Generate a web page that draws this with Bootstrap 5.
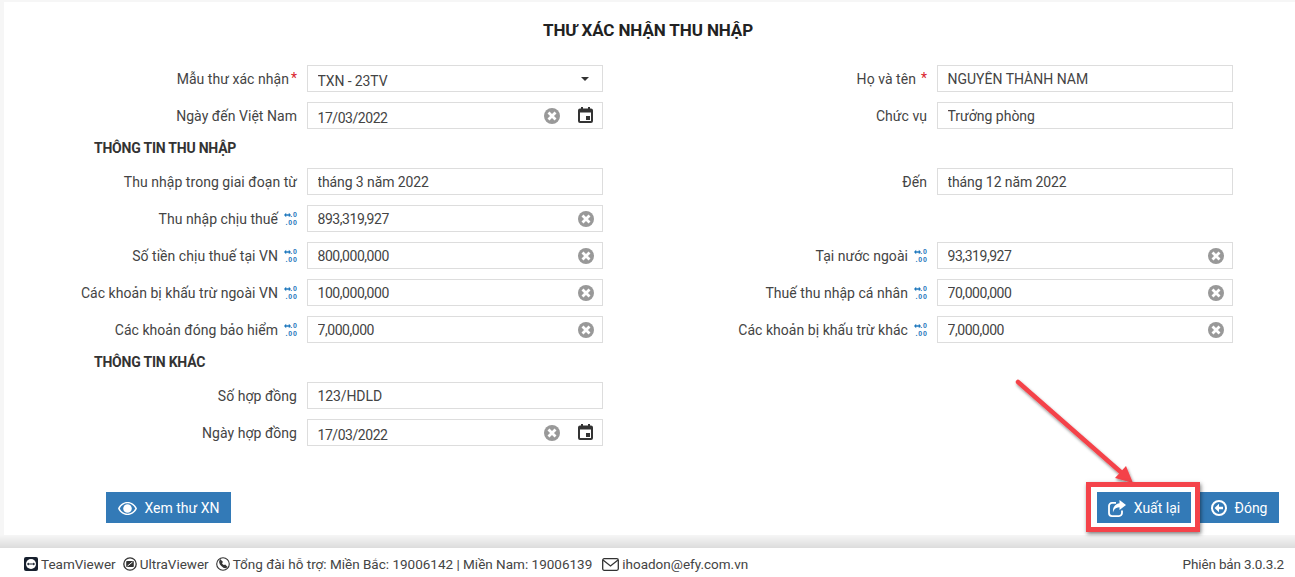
<!DOCTYPE html>
<html lang="vi">
<head>
<meta charset="utf-8">
<title>Thư xác nhận thu nhập</title>
<link rel="stylesheet" href="https://cdn.jsdelivr.net/npm/bootstrap@5.3.0/dist/css/bootstrap.min.css">
<style>
html,body{height:577px;overflow:hidden}
body{font-family:Roboto,"Liberation Sans",sans-serif;font-size:14px;color:#333;background:#fff;position:relative}
.shell{height:548px;padding:2px 0 13px 4px;background:linear-gradient(#f6f6f6 0,#f6f6f6 535px,#dcdcdc 548px)}
.sheet{height:533px;background:#fff;position:relative}
.page-title{font-size:17px;font-weight:700;color:#222;text-align:center;line-height:20px;margin:0;padding:18px 0 25px 0;width:1288px;letter-spacing:-.1px;font-family:Roboto,sans-serif}
.frow{height:27px;margin-bottom:10px}
.lbl{text-align:right;line-height:26px;color:#444;padding-right:10px;white-space:nowrap;display:flex;justify-content:flex-end;align-items:center;gap:5px;letter-spacing:.04px}
.lbl-a{width:303px}
.lbl-b{width:334px}
.req{color:#d9232d;margin-left:-3px;align-self:flex-start;line-height:26px}
.fbox{width:296px;height:27px;position:relative}
.fld.form-control{height:27px;min-height:27px;border:1px solid #ddd;border-radius:0;padding:0 9.5px;font-size:14px;line-height:23px;color:#444;font-family:Roboto,sans-serif;background:#fff;box-shadow:none}
.fld.low{padding-top:5px}
.fld.tn{letter-spacing:-.45px}
.fld.ts{letter-spacing:-.1px}
.sect{font-weight:700;font-size:14px;color:#333;line-height:20px;padding-left:90px;height:39px;padding-top:9px;margin-top:-10px;letter-spacing:-.22px}
.ico-x{position:absolute;right:9px;top:6px;width:16px;height:16px}
.ico-x2{right:43px}
.ico-cal{position:absolute;right:10px;top:5px;width:15px;height:16px}
.caret-dn{position:absolute;right:14px;top:12px;width:0;height:0;border-left:4px solid transparent;border-right:4px solid transparent;border-top:4.5px solid #333}
.numf{display:inline-flex;flex-direction:column;align-items:flex-end;width:14px;height:17px;flex:none;margin-top:2px;color:#1f78bd;font-size:7px;font-weight:700;line-height:8.2px;font-family:"Liberation Sans",sans-serif;letter-spacing:.9px}
.numl{display:flex;align-items:center;margin-right:-.9px}
.numl svg{margin-right:-.5px}
.actions{position:absolute;left:102px;top:490px;width:1173px;display:flex;justify-content:space-between}
.btn.act{background:#337ab7;border:0;border-radius:0;color:#fff;height:31px;font-size:14px;font-family:Roboto,sans-serif;padding:1px 0 0;display:inline-flex;align-items:center;font-weight:400;white-space:nowrap}
.act-a{width:125px;justify-content:center;gap:8px}
.act-b{width:94px;justify-content:center;gap:8px;margin-right:8px}
.act-c{width:80px;justify-content:center;gap:8px}
.redbox{position:absolute;left:1086px;top:482px;width:114px;height:50px;border:5px solid #f4434a;box-shadow:1px 2px 4px rgba(0,0,0,.5);pointer-events:none}
.arrow{position:absolute;left:1005px;top:370px;width:140px;height:125px;overflow:visible;pointer-events:none}
.foot{height:29px;background:#fff;padding:3px 11px 0 24px;font-size:13.5px;color:#444;line-height:26px;display:flex;justify-content:space-between;align-items:center}
.foot svg{flex:none}
.fitem{display:inline-flex;align-items:center;gap:3px;margin-right:7px}
.fitem-mail{margin-left:3px}
.ver{letter-spacing:-.15px}
</style>
</head>
<body>
<svg width="0" height="0" class="position-absolute" aria-hidden="true">
  <symbol id="i-x" viewBox="0 0 16 16"><circle cx="8" cy="8" r="8" fill="#999"/><path d="M4.500 4.500l7 7M11.500 4.500l-7 7" stroke="#fff" stroke-width="2.800"/></symbol>
  <symbol id="i-cal" viewBox="0 0 15 16"><path fill="#333" fill-rule="evenodd" d="M3 0h2v1.500h5V0h2v1.500h1a2 2 0 0 1 2 2V14a2 2 0 0 1-2 2H2a2 2 0 0 1-2-2V3.500a2 2 0 0 1 2-2h1zM2 5.500V14h11V5.500zM8 9h4v4H8z"/></symbol>
  <symbol id="i-ar" viewBox="0 0 7 6"><path d="M0 3l2.200-2.300v1.600h2.600V.7L7 3 4.800 5.300V3.700H2.200v1.600z" fill="#1f78bd"/></symbol>
</svg>
<div class="shell">
<div class="sheet">
<h1 class="page-title">THƯ XÁC NHẬN THU NHẬP</h1>

<div class="d-flex frow">
  <div class="lbl lbl-a">Mẫu thư xác nhận<span class="req">*</span></div>
  <div class="fbox"><input class="form-control fld low ts" value="TXN - 23TV" readonly><span class="caret-dn"></span></div>
  <div class="lbl lbl-b">Họ và tên <span class="req ms-0">*</span></div>
  <div class="fbox"><input class="form-control fld" value="NGUYỄN THÀNH NAM" readonly></div>
</div>
<div class="d-flex frow">
  <div class="lbl lbl-a">Ngày đến Việt Nam</div>
  <div class="fbox"><input class="form-control fld low tn" value="17/03/2022" readonly>
    <svg class="ico-x ico-x2"><use href="#i-x"/></svg>
    <svg class="ico-cal"><use href="#i-cal"/></svg>
  </div>
  <div class="lbl lbl-b">Chức vụ</div>
  <div class="fbox"><input class="form-control fld" value="Trưởng phòng" readonly></div>
</div>

<div class="sect">THÔNG TIN THU NHẬP</div>

<div class="d-flex frow">
  <div class="lbl lbl-a">Thu nhập trong giai đoạn từ</div>
  <div class="fbox"><input class="form-control fld ts" value="tháng 3 năm 2022" readonly></div>
  <div class="lbl lbl-b">Đến</div>
  <div class="fbox"><input class="form-control fld ts" value="tháng 12 năm 2022" readonly></div>
</div>
<div class="d-flex frow">
  <div class="lbl lbl-a">Thu nhập chịu thuế <span class="numf"><span class="numl"><svg width="7" height="6"><use href="#i-ar"/></svg>.0</span><span class="numl">.00</span></span></div>
  <div class="fbox"><input class="form-control fld tn" value="893,319,927" readonly>
    <svg class="ico-x"><use href="#i-x"/></svg></div>
</div>
<div class="d-flex frow">
  <div class="lbl lbl-a">Số tiền chịu thuế tại VN <span class="numf"><span class="numl"><svg width="7" height="6"><use href="#i-ar"/></svg>.0</span><span class="numl">.00</span></span></div>
  <div class="fbox"><input class="form-control fld tn" value="800,000,000" readonly>
    <svg class="ico-x"><use href="#i-x"/></svg></div>
  <div class="lbl lbl-b">Tại nước ngoài <span class="numf"><span class="numl"><svg width="7" height="6"><use href="#i-ar"/></svg>.0</span><span class="numl">.00</span></span></div>
  <div class="fbox"><input class="form-control fld tn" value="93,319,927" readonly>
    <svg class="ico-x"><use href="#i-x"/></svg></div>
</div>
<div class="d-flex frow">
  <div class="lbl lbl-a">Các khoản bị khấu trừ ngoài VN <span class="numf"><span class="numl"><svg width="7" height="6"><use href="#i-ar"/></svg>.0</span><span class="numl">.00</span></span></div>
  <div class="fbox"><input class="form-control fld tn" value="100,000,000" readonly>
    <svg class="ico-x"><use href="#i-x"/></svg></div>
  <div class="lbl lbl-b">Thuế thu nhập cá nhân <span class="numf"><span class="numl"><svg width="7" height="6"><use href="#i-ar"/></svg>.0</span><span class="numl">.00</span></span></div>
  <div class="fbox"><input class="form-control fld tn" value="70,000,000" readonly>
    <svg class="ico-x"><use href="#i-x"/></svg></div>
</div>
<div class="d-flex frow">
  <div class="lbl lbl-a">Các khoản đóng bảo hiểm <span class="numf"><span class="numl"><svg width="7" height="6"><use href="#i-ar"/></svg>.0</span><span class="numl">.00</span></span></div>
  <div class="fbox"><input class="form-control fld tn" value="7,000,000" readonly>
    <svg class="ico-x"><use href="#i-x"/></svg></div>
  <div class="lbl lbl-b">Các khoản bị khấu trừ khác <span class="numf"><span class="numl"><svg width="7" height="6"><use href="#i-ar"/></svg>.0</span><span class="numl">.00</span></span></div>
  <div class="fbox"><input class="form-control fld tn" value="7,000,000" readonly>
    <svg class="ico-x"><use href="#i-x"/></svg></div>
</div>

<div class="sect">THÔNG TIN KHÁC</div>

<div class="d-flex frow">
  <div class="lbl lbl-a">Số hợp đồng</div>
  <div class="fbox"><input class="form-control fld ts" value="123/HDLD" readonly></div>
</div>
<div class="d-flex frow">
  <div class="lbl lbl-a">Ngày hợp đồng</div>
  <div class="fbox"><input class="form-control fld low tn" value="17/03/2022" readonly>
    <svg class="ico-x ico-x2"><use href="#i-x"/></svg>
    <svg class="ico-cal"><use href="#i-cal"/></svg>
  </div>
</div>

<div class="actions">
  <button class="btn act act-a" type="button">
    <svg width="19" height="13" viewBox="0 0 19 13"><path fill="#fff" fill-rule="evenodd" d="M9.500 0C5.300 0 1.800 2.600 0 6.500 1.800 10.400 5.300 13 9.500 13s7.700-2.600 9.500-6.500C17.200 2.600 13.700 0 9.500 0zm0 1.300c3.300 0 6.200 2 7.800 5.200-1.600 3.200-4.500 5.200-7.800 5.200S3.300 9.700 1.700 6.500C3.300 3.300 6.200 1.300 9.500 1.300z"/><circle cx="9.500" cy="6.500" r="4.300" fill="#fff"/></svg>
    Xem thư XN</button>
  <div class="d-flex">
    <button class="btn act act-b" type="button">
      <svg width="18" height="17" viewBox="0 0 18 17"><path fill="none" stroke="#fff" stroke-width="1.800" d="M8 2.900H4a3 3 0 0 0-3 3v7.200a3 3 0 0 0 3 3h7a3 3 0 0 0 3-3V10.500"/><path fill="#fff" d="M11.500 0L18 5l-6.500 5V7.200C8.500 7.200 6 8.500 5 12.500c-.6-5 2-8.500 6.500-9.300z"/></svg>
      Xuất lại</button>
    <button class="btn act act-c" type="button">
      <svg width="16" height="16" viewBox="0 0 16 16"><circle cx="8" cy="8" r="7" fill="none" stroke="#fff" stroke-width="2"/><path fill="#fff" d="M8 3.800v2.900h4v2.600H8v2.900L3.600 8z"/></svg>
      Đóng</button>
  </div>
</div>
</div>
</div>

<div class="foot">
  <div class="d-flex align-items-center">
    <span class="fitem"><svg width="14" height="14" viewBox="0 0 14 14"><rect width="14" height="14" rx="2" fill="#17202e"/><circle cx="7" cy="7" r="5" fill="#fff"/><path d="M2.800 7l2-1.600v1h4.400v-1l2 1.600-2 1.600v-1H4.800v1z" fill="#17202e"/></svg>TeamViewer</span>
    <span class="fitem"><svg width="14" height="14" viewBox="0 0 14 14"><circle cx="7" cy="7" r="6.200" fill="none" stroke="#333" stroke-width="1.300"/><rect x="3.200" y="4" width="7.600" height="6" rx=".8" fill="#333"/><path d="M4.500 9l5-4" stroke="#fff"/></svg>UltraViewer</span>
    <span class="fitem"><svg width="14" height="14" viewBox="0 0 14 14"><circle cx="7" cy="7" r="6.300" fill="none" stroke="#333" stroke-width="1.100"/><path fill="none" stroke="#333" stroke-width="1.500" d="M4.300 3.300c-.9 1.500 0 3.600 1.500 5.200 1.500 1.500 3.500 2.400 4.700 1.500L9 8.400 7.800 9C6.700 8.400 5.500 7 5 6l1-1z"/></svg>Tổng đài hỗ trợ: Miền Bắc: 19006142 | Miền Nam: 19006139</span>
    <span class="fitem fitem-mail"><svg width="17" height="13" viewBox="0 0 17 13"><rect x=".7" y=".7" width="15.600" height="11.600" rx="1.500" fill="none" stroke="#333" stroke-width="1.300"/><path d="M1 2l7.500 6L16 2" fill="none" stroke="#333" stroke-width="1.300"/></svg>ihoadon@efy.com.vn</span>
  </div>
  <div class="ver">Phiên bản 3.0.3.2</div>
</div>

<svg class="arrow" viewBox="0 0 140 125">
  <defs><filter id="ds" x="-20%" y="-20%" width="140%" height="140%"><feDropShadow dx="1" dy="2" stdDeviation="1.500" flood-color="#000" flood-opacity=".45"/></filter></defs>
  <g filter="url(#ds)"><path d="M13 12L118 104" stroke="#f4434a" stroke-width="4.500" stroke-linecap="round"/><path d="M128 113L110 108 121 96z" fill="#f4434a"/></g>
</svg>
<div class="redbox"></div>
</body>
</html>
